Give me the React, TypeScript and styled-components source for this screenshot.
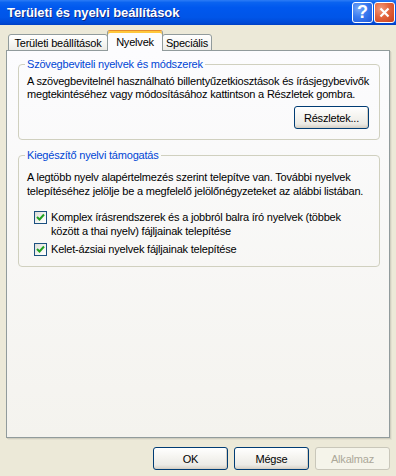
import styled, { createGlobalStyle } from "styled-components";

const GlobalStyle = createGlobalStyle`
  html, body {
    margin: 0;
    padding: 0;
  }
  body {
    font-family: "Liberation Sans", Arial, sans-serif;
    font-size: 11px;
    letter-spacing: -0.2px;
    color: #000;
  }
`;

const Window = styled.div`
  width: 396px;
  height: 476px;
  display: flex;
  flex-direction: column;
  background: #ECE9D8;
  overflow: hidden;
`;

const TitleBar = styled.div`
  height: 25px;
  flex-shrink: 0;
  display: flex;
  align-items: center;
  padding: 0 1px 0 7px;
  box-sizing: border-box;
  background: linear-gradient(to bottom, #2C7CF6 0%, #0A63F0 10%, #0058EE 30%, #0055E8 70%, #0049D6 92%, #003FC3 100%);
`;

const Title = styled.div`
  color: #fff;
  font-family: "Liberation Sans", Arial, sans-serif;
  font-weight: bold;
  font-size: 13px;
  letter-spacing: -0.1px;
  text-shadow: 1px 1px 0 #0F2A8A;
`;

const TitleButtons = styled.div`
  margin-left: auto;
  display: flex;
  gap: 1px;
`;

const TitleButton = styled.div<{ $close?: boolean }>`
  width: 21px;
  height: 21px;
  box-sizing: border-box;
  border: 1px solid #fff;
  border-radius: 3px;
  display: flex;
  align-items: center;
  justify-content: center;
  color: #fff;
  font-family: "Liberation Sans", Arial, sans-serif;
  font-weight: bold;
  font-size: 18px;
  background: ${p => p.$close
    ? 'radial-gradient(circle at 30% 30%, #F39A7C 0%, #E3653D 45%, #C8401C 100%)'
    : 'radial-gradient(circle at 30% 30%, #7AAAF8 0%, #3A7BF0 45%, #1E58D8 100%)'};
`;

const Content = styled.div`
  display: flex;
  flex-direction: column;
  padding: 6px 6px 0 6px;
`;

const TabStrip = styled.div`
  display: flex;
  align-items: flex-end;
  height: 20px;
  padding-left: 2px;
  position: relative;
  z-index: 1;
  margin-bottom: -1px;
`;

const Tab = styled.div<{ $active?: boolean; $w: number }>`
  width: ${p => p.$w}px;
  height: ${p => p.$active ? 21 : 17}px;
  box-sizing: border-box;
  display: flex;
  align-items: center;
  justify-content: center;
  border: 1px solid #919B9C;
  border-bottom: ${p => p.$active ? 'none' : '1px solid #919B9C'};
  border-top: ${p => p.$active ? '1px solid #E68B2C' : '1px solid #919B9C'};
  border-radius: 3px 3px 0 0;
  margin-left: ${p => p.$active ? -1 : 0}px;
  margin-right: ${p => p.$active ? -1 : 0}px;
  padding-top: ${p => p.$active ? 1 : 0}px;
  background: ${p => p.$active
    ? '#FCFCFE'
    : 'linear-gradient(to bottom, #FFFFFF 0%, #F7F7F4 50%, #ECEBE6 100%)'};
  box-shadow: ${p => p.$active ? 'inset 0 2px 0 #FFC83C' : 'none'};
  position: relative;
  z-index: ${p => p.$active ? 2 : 1};
`;

const Panel = styled.div`
  height: 388px;
  box-sizing: border-box;
  border: 1px solid #919B9C;
  background: linear-gradient(to bottom, #FCFCFE 0%, #F4F3EE 100%);
  box-shadow: 1px 1px 0 #D0CEBF, 2px 2px 0 #E3E0D0;
  padding: 7px 9px 0 11px;
  display: flex;
  flex-direction: column;
`;

const Group = styled.fieldset<{ $gap: number; $top: number }>`
  margin: ${p => p.$gap}px 0 0 0;
  padding: ${p => p.$top}px 10px 10px 8px;
  border: 1px solid #D0D0BF;
  border-radius: 4px;
  min-width: 0;
`;

const Legend = styled.legend`
  color: #0046D5;
  padding: 0 2px;
  margin-left: -2px;
  line-height: 13px;
`;

const Text = styled.div<{ $lh?: number }>`
  line-height: ${p => p.$lh ?? 13}px;
  white-space: nowrap;
`;

const DetailsRow = styled.div`
  display: flex;
  justify-content: flex-end;
  margin-top: 5px;
`;

const Button = styled.div<{ $disabled?: boolean }>`
  width: 75px;
  height: 23px;
  box-sizing: border-box;
  border: 1px solid ${p => p.$disabled ? '#C9C7BA' : '#003C74'};
  border-radius: 3px;
  display: flex;
  align-items: center;
  justify-content: center;
  color: ${p => p.$disabled ? '#ACA899' : '#000'};
  background: ${p => p.$disabled
    ? '#F5F4EA'
    : 'linear-gradient(to bottom, #FFFFFF 0%, #F6F5F1 40%, #ECEBE6 80%, #D6D0C5 100%)'};
  box-shadow: ${p => p.$disabled ? 'none' : 'inset -1px -1px 0 #D6D0C5'};
`;

const CheckRow = styled.div<{ $gap: number }>`
  display: flex;
  align-items: flex-start;
  gap: 4px;
  margin-top: ${p => p.$gap}px;
  padding-left: 7px;
`;

const CheckBox = styled.div`
  width: 13px;
  height: 13px;
  margin-top: 1px;
  flex-shrink: 0;
  box-sizing: border-box;
  border: 1px solid #1C5180;
  background: linear-gradient(135deg, #DCDCD7 0%, #F5F5F2 60%, #FFFFFF 100%);
  display: flex;
  align-items: center;
  justify-content: center;
`;

const ButtonRow = styled.div`
  display: flex;
  justify-content: flex-end;
  gap: 6px;
  padding: 9px 6px 0 0;
`;

const Check = () => (
  <svg width="9" height="9" viewBox="0 0 9 9">
    <path d="M1 4 L3.5 6.5 L8 1.5" stroke="#21A121" strokeWidth="2" fill="none" />
  </svg>
);

const CloseGlyph = () => (
  <svg width="11" height="11" viewBox="0 0 11 11">
    <path d="M1.5 1.5 L9.5 9.5 M9.5 1.5 L1.5 9.5" stroke="#fff" strokeWidth="2.2" />
  </svg>
);

export default function App() {
  return (
    <>
      <GlobalStyle />
      <Window>
        <TitleBar>
          <Title>Területi és nyelvi beállítások</Title>
          <TitleButtons>
            <TitleButton>?</TitleButton>
            <TitleButton $close><CloseGlyph /></TitleButton>
          </TitleButtons>
        </TitleBar>
        <Content>
          <TabStrip>
            <Tab $w={100}>Területi beállítások</Tab>
            <Tab $w={56} $active>Nyelvek</Tab>
            <Tab $w={50}>Speciális</Tab>
          </TabStrip>
          <Panel>
            <Group $gap={0} $top={4}>
              <Legend>Szövegbeviteli nyelvek és módszerek</Legend>
              <Text>A szövegbevitelnél használható billentyűzetkiosztások és írásjegybevivők</Text>
              <Text>megtekintéséhez vagy módosításához kattintson a Részletek gombra.</Text>
              <DetailsRow>
                <Button>Részletek...</Button>
              </DetailsRow>
            </Group>
            <Group $gap={9} $top={8}>
              <Legend>Kiegészítő nyelvi támogatás</Legend>
              <Text $lh={14}>A legtöbb nyelv alapértelmezés szerint telepítve van. További nyelvek</Text>
              <Text $lh={14}>telepítéséhez jelölje be a megfelelő jelölőnégyzeteket az alábbi listában.</Text>
              <CheckRow $gap={12}>
                <CheckBox><Check /></CheckBox>
                <div>
                  <Text $lh={14}>Komplex írásrendszerek és a jobbról balra író nyelvek (többek</Text>
                  <Text $lh={14}>között a thai nyelv) fájljainak telepítése</Text>
                </div>
              </CheckRow>
              <CheckRow $gap={4}>
                <CheckBox><Check /></CheckBox>
                <Text $lh={14}>Kelet-ázsiai nyelvek fájljainak telepítése</Text>
              </CheckRow>
            </Group>
          </Panel>
        </Content>
        <ButtonRow>
          <Button>OK</Button>
          <Button>Mégse</Button>
          <Button $disabled>Alkalmaz</Button>
        </ButtonRow>
      </Window>
    </>
  );
}
